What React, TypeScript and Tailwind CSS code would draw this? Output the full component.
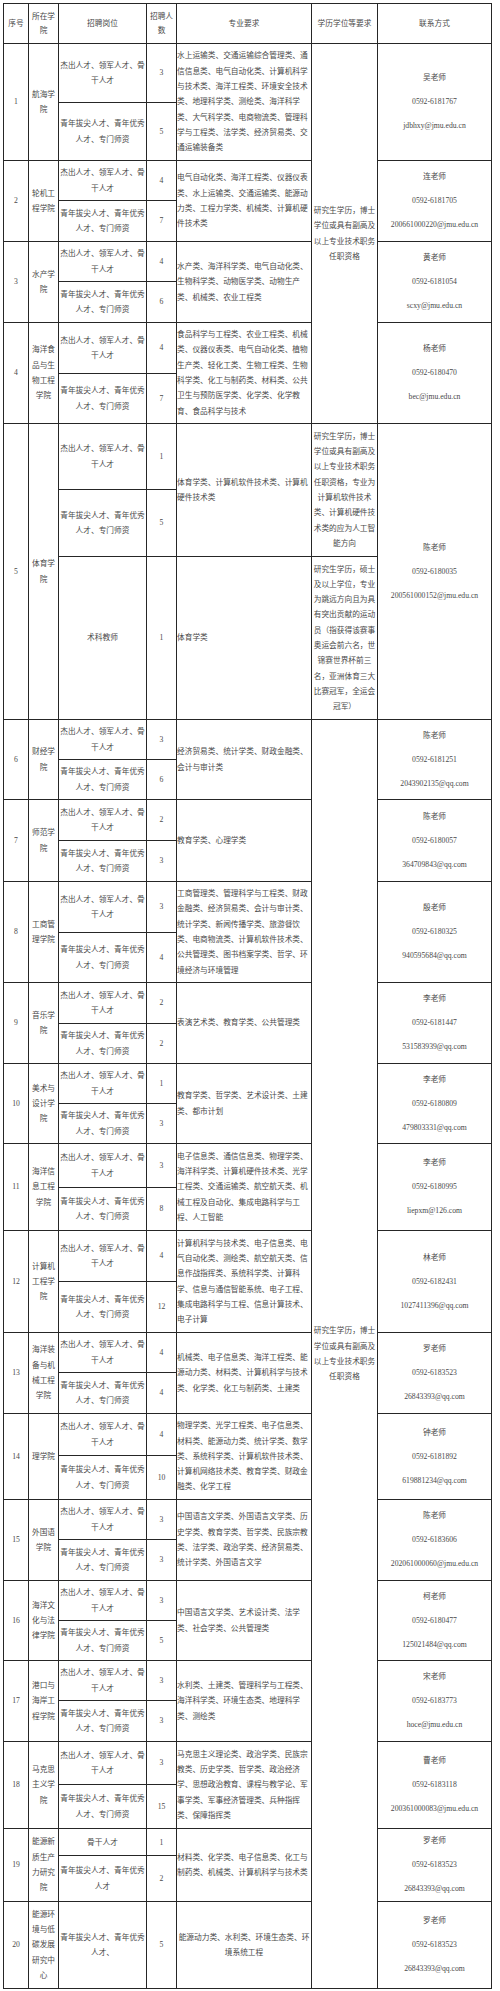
import React from "react";

type Sub = { pos: string; n: string; h: string };
type Major = { t: string; span: number; center?: boolean };
type Row = {
  no: string;
  college: string;
  subs: Sub[];
  majors: Major[];
  contact: [string, string, string];
};

const P1 = "杰出人才、领军人才、骨干人才";
const P2 = "青年拔尖人才、青年优秀人才、专门师资";

const rows: Row[] = [
  {
    no: "1",
    college: "航海学院",
    subs: [
      { pos: P1, n: "3", h: "h-[59px]" },
      { pos: P2, n: "5", h: "h-[58px]" },
    ],
    majors: [
      {
        t: "水上运输类、交通运输综合管理类、通信信息类、电气自动化类、计算机科学与技术类、海洋工程类、环境安全技术类、地理科学类、测绘类、海洋科学类、大气科学类、电商物流类、管理科学与工程类、法学类、经济贸易类、交通运输装备类",
        span: 2,
      },
    ],
    contact: ["吴老师", "0592-6181767", "jdbhxy@jmu.edu.cn"],
  },
  {
    no: "2",
    college: "轮机工程学院",
    subs: [
      { pos: P1, n: "4", h: "h-[40px]" },
      { pos: P2, n: "7", h: "h-[41px]" },
    ],
    majors: [
      {
        t: "电气自动化类、海洋工程类、仪器仪表类、水上运输类、交通运输类、能源动力类、工程力学类、机械类、计算机硬件技术类",
        span: 2,
      },
    ],
    contact: ["连老师", "0592-6181705", "200661000220@jmu.edu.cn"],
  },
  {
    no: "3",
    college: "水产学院",
    subs: [
      { pos: P1, n: "4", h: "h-[40px]" },
      { pos: P2, n: "6", h: "h-[41px]" },
    ],
    majors: [
      {
        t: "水产类、海洋科学类、电气自动化类、生物科学类、动物医学类、动物生产类、机械类、农业工程类",
        span: 2,
      },
    ],
    contact: ["黄老师", "0592-6181054", "scxy@jmu.edu.cn"],
  },
  {
    no: "4",
    college: "海洋食品与生物工程学院",
    subs: [
      { pos: P1, n: "4", h: "h-[51px]" },
      { pos: P2, n: "7", h: "h-[50px]" },
    ],
    majors: [
      {
        t: "食品科学与工程类、农业工程类、机械类、仪器仪表类、电气自动化类、植物生产类、轻化工类、生物工程类、生物科学类、化工与制药类、材料类、公共卫生与预防医学类、化学类、化学教育、食品科学与技术",
        span: 2,
      },
    ],
    contact: ["杨老师", "0592-6180470", "bec@jmu.edu.cn"],
  },
  {
    no: "5",
    college: "体育学院",
    subs: [
      { pos: P1, n: "1", h: "h-[66px]" },
      { pos: P2, n: "5", h: "h-[67px]" },
      { pos: "术科教师", n: "1", h: "h-[163px]" },
    ],
    majors: [
      { t: "体育学类、计算机软件技术类、计算机硬件技术类", span: 2 },
      { t: "体育学类", span: 1 },
    ],
    contact: ["陈老师", "0592-6180035", "200561000152@jmu.edu.cn"],
  },
  {
    no: "6",
    college: "财经学院",
    subs: [
      { pos: P1, n: "3", h: "h-[40px]" },
      { pos: P2, n: "6", h: "h-[40px]" },
    ],
    majors: [{ t: "经济贸易类、统计学类、财政金融类、会计与审计类", span: 2 }],
    contact: ["陈老师", "0592-6181251", "2043902135@qq.com"],
  },
  {
    no: "7",
    college: "师范学院",
    subs: [
      { pos: P1, n: "2", h: "h-[41px]" },
      { pos: P2, n: "3", h: "h-[41px]" },
    ],
    majors: [{ t: "教育学类、心理学类", span: 2 }],
    contact: ["陈老师", "0592-6180057", "364709843@qq.com"],
  },
  {
    no: "8",
    college: "工商管理学院",
    subs: [
      { pos: P1, n: "3", h: "h-[51px]" },
      { pos: P2, n: "4", h: "h-[50px]" },
    ],
    majors: [
      {
        t: "工商管理类、管理科学与工程类、财政金融类、经济贸易类、会计与审计类、统计学类、新闻传播学类、旅游餐饮类、电商物流类、计算机软件技术类、公共管理类、图书档案学类、哲学、环境经济与环境管理",
        span: 2,
      },
    ],
    contact: ["殷老师", "0592-6180325", "940595684@qq.com"],
  },
  {
    no: "9",
    college: "音乐学院",
    subs: [
      { pos: P1, n: "2", h: "h-[41px]" },
      { pos: P2, n: "2", h: "h-[40px]" },
    ],
    majors: [{ t: "表演艺术类、教育学类、公共管理类", span: 2 }],
    contact: ["李老师", "0592-6181447", "531583939@qq.com"],
  },
  {
    no: "10",
    college: "美术与设计学院",
    subs: [
      { pos: P1, n: "1", h: "h-[40px]" },
      { pos: P2, n: "3", h: "h-[40px]" },
    ],
    majors: [{ t: "教育学类、哲学类、艺术设计类、土建类、都市计划", span: 2 }],
    contact: ["李老师", "0592-6180809", "479803331@qq.com"],
  },
  {
    no: "11",
    college: "海洋信息工程学院",
    subs: [
      { pos: P1, n: "3", h: "h-[44px]" },
      { pos: P2, n: "8", h: "h-[43px]" },
    ],
    majors: [
      {
        t: "电子信息类、通信信息类、物理学类、海洋科学类、计算机硬件技术类、光学工程类、交通运输类、航空航天类、机械工程及自动化、集成电路科学与工程、人工智能",
        span: 2,
      },
    ],
    contact: ["李老师", "0592-6180995", "liepxm@126.com"],
  },
  {
    no: "12",
    college: "计算机工程学院",
    subs: [
      { pos: P1, n: "4", h: "h-[51px]" },
      { pos: P2, n: "12", h: "h-[51px]" },
    ],
    majors: [
      {
        t: "计算机科学与技术类、电子信息类、电气自动化类、测绘类、航空航天类、信息作战指挥类、系统科学类、计算科学、信息与通信智能系统、电子工程、集成电路科学与工程、信息计算技术、电子计算",
        span: 2,
      },
    ],
    contact: ["林老师", "0592-6182431", "1027411396@qq.com"],
  },
  {
    no: "13",
    college: "海洋装备与机械工程学院",
    subs: [
      { pos: P1, n: "4", h: "h-[40px]" },
      { pos: P2, n: "4", h: "h-[41px]" },
    ],
    majors: [
      {
        t: "机械类、电子信息类、海洋工程类、能源动力类、材料类、计算机科学与技术类、化学类、化工与制药类、土建类",
        span: 2,
      },
    ],
    contact: ["罗老师", "0592-6183523", "26843393@qq.com"],
  },
  {
    no: "14",
    college: "理学院",
    subs: [
      { pos: P1, n: "4", h: "h-[42px]" },
      { pos: P2, n: "10", h: "h-[44px]" },
    ],
    majors: [
      {
        t: "物理学类、光学工程类、电子信息类、材料类、能源动力类、统计学类、数学类、系统科学类、计算机软件技术类、计算机网络技术类、教育学类、财政金融类、化学工程",
        span: 2,
      },
    ],
    contact: ["钟老师", "0592-6181892", "619881234@qq.com"],
  },
  {
    no: "15",
    college: "外国语学院",
    subs: [
      { pos: P1, n: "3", h: "h-[40px]" },
      { pos: P2, n: "3", h: "h-[41px]" },
    ],
    majors: [
      {
        t: "中国语言文学类、外国语言文学类、历史学类、教育学类、哲学类、民族宗教类、法学类、政治学类、经济贸易类、统计学类、外国语言文学",
        span: 2,
      },
    ],
    contact: ["陈老师", "0592-6183606", "202061000060@jmu.edu.cn"],
  },
  {
    no: "16",
    college: "海洋文化与法律学院",
    subs: [
      { pos: P1, n: "3", h: "h-[40px]" },
      { pos: P2, n: "5", h: "h-[40px]" },
    ],
    majors: [
      { t: "中国语言文学类、艺术设计类、法学类、社会学类、公共管理类", span: 2 },
    ],
    contact: ["柯老师", "0592-6180477", "125021484@qq.com"],
  },
  {
    no: "17",
    college: "港口与海岸工程学院",
    subs: [
      { pos: P1, n: "3", h: "h-[40px]" },
      { pos: P2, n: "3", h: "h-[41px]" },
    ],
    majors: [
      {
        t: "水利类、土建类、管理科学与工程类、海洋科学类、环境生态类、地理科学类、测绘类",
        span: 2,
      },
    ],
    contact: ["宋老师", "0592-6183773", "hoce@jmu.edu.cn"],
  },
  {
    no: "18",
    college: "马克思主义学院",
    subs: [
      { pos: P1, n: "3", h: "h-[43px]" },
      { pos: P2, n: "15", h: "h-[44px]" },
    ],
    majors: [
      {
        t: "马克思主义理论类、政治学类、民族宗教类、历史学类、哲学类、政治经济学、思想政治教育、课程与教学论、军事学类、军事经济管理类、兵种指挥类、保障指挥类",
        span: 2,
      },
    ],
    contact: ["曹老师", "0592-6183118", "200361000083@jmu.edu.cn"],
  },
  {
    no: "19",
    college: "能源新质生产力研究院",
    subs: [
      { pos: "骨干人才", n: "1", h: "h-[27px]" },
      { pos: "青年拔尖人才、青年优秀人才", n: "2", h: "h-[45px]" },
    ],
    majors: [
      {
        t: "材料类、化学类、电子信息类、化工与制药类、机械类、计算机科学与技术类",
        span: 2,
      },
    ],
    contact: ["罗老师", "0592-6183523", "26843393@qq.com"],
  },
  {
    no: "20",
    college: "能源环境与低碳发展研究中心",
    subs: [{ pos: "青年拔尖人才、青年优秀人才、", n: "5", h: "h-[87px]" }],
    majors: [
      { t: "能源动力类、水利类、环境生态类、环境系统工程", span: 1, center: true },
    ],
    contact: ["罗老师", "0592-6183523", "26843393@qq.com"],
  },
];

const EDU_A = "研究生学历，博士学位或具有副高及以上专业技术职务任职资格";
const EDU_B =
  "研究生学历，博士学位或具有副高及以上专业技术职务任职资格，专业为计算机软件技术类、计算机硬件技术类的应为人工智能方向";
const EDU_C =
  "研究生学历，硕士及以上学位，专业为跳远方向且为具有突出贡献的运动员（指获得该赛事奥运会前六名，世锦赛世界杯前三名，亚洲体育三大比赛冠军，全运会冠军）";

const edu: Record<number, { t: string; span: number }> = {
  0: { t: EDU_A, span: 8 },
  8: { t: EDU_B, span: 2 },
  10: { t: EDU_C, span: 1 },
  11: { t: EDU_A, span: 29 },
};

const cell = "border border-[#262626] p-0 align-middle";

export default function App() {
  let g = 0;
  const body: React.ReactNode[] = [];
  rows.forEach((r) => {
    let majorIdx = 0;
    let majorStart = 0;
    r.subs.forEach((s, i) => {
      const gi = g;
      g += 1;
      const cells: React.ReactNode[] = [];
      if (i === 0) {
        cells.push(
          <td key="no" rowSpan={r.subs.length} className={`${cell} text-center`}>
            {r.no}
          </td>
        );
        cells.push(
          <td
            key="col"
            rowSpan={r.subs.length}
            className={`${cell} text-center px-[1px]`}
          >
            {r.college}
          </td>
        );
      }
      cells.push(
        <td key="pos" className={`${cell} text-center`}>
          {s.pos}
        </td>
      );
      cells.push(
        <td key="n" className={`${cell} text-center`}>
          {s.n}
        </td>
      );
      if (i === majorStart && majorIdx < r.majors.length) {
        const m = r.majors[majorIdx];
        cells.push(
          <td
            key="major"
            rowSpan={m.span}
            className={`${cell} ${m.center ? "text-center" : "text-left"}`}
          >
            {m.t}
          </td>
        );
        majorStart += m.span;
        majorIdx += 1;
      }
      if (edu[gi]) {
        cells.push(
          <td key="edu" rowSpan={edu[gi].span} className={`${cell} text-center`}>
            {edu[gi].t}
          </td>
        );
      }
      if (i === 0) {
        cells.push(
          <td
            key="contact"
            rowSpan={r.subs.length}
            className={`${cell} text-center leading-[24px]`}
          >
            <div>{r.contact[0]}</div>
            <div>{r.contact[1]}</div>
            <div>{r.contact[2]}</div>
          </td>
        );
      }
      body.push(
        <tr key={`${r.no}-${i}`} className={s.h}>
          {cells}
        </tr>
      );
    });
  });

  return (
    <div className="bg-white w-[500px] min-h-[1991px] pt-[3px] pl-[3px] font-['Liberation_Serif','Noto_Sans_CJK_SC',serif] text-[7.7px] leading-[15.3px] text-[#4a4a4a]">
      <table className="table-fixed border-collapse w-[488px]">
        <colgroup>
          <col className="w-[25px]" />
          <col className="w-[30px]" />
          <col className="w-[88px]" />
          <col className="w-[30px]" />
          <col className="w-[135px]" />
          <col className="w-[66px]" />
          <col className="w-[114px]" />
        </colgroup>
        <thead>
          <tr className="h-[40px]">
            <th className={`${cell} font-normal text-center`}>序号</th>
            <th className={`${cell} font-normal text-center px-[1px] leading-[14px]`}>
              所在学院
            </th>
            <th className={`${cell} font-normal text-center`}>招聘岗位</th>
            <th className={`${cell} font-normal text-center leading-[14px]`}>
              招聘人数
            </th>
            <th className={`${cell} font-normal text-center`}>专业要求</th>
            <th className={`${cell} font-normal text-center`}>学历学位等要求</th>
            <th className={`${cell} font-normal text-center`}>联系方式</th>
          </tr>
        </thead>
        <tbody>{body}</tbody>
      </table>
    </div>
  );
}
